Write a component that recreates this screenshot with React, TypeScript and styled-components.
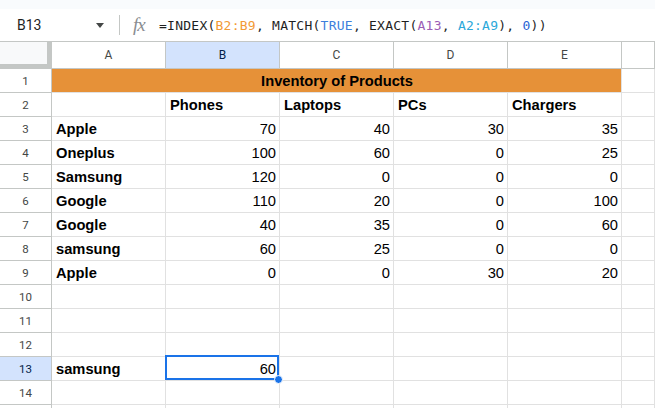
import styled, { createGlobalStyle } from "styled-components";

const GlobalStyle = createGlobalStyle`
  html, body {
    margin: 0;
    padding: 0;
    background: #ffffff;
    overflow: hidden;
  }
  body {
    font-family: "Liberation Sans", Arial, sans-serif;
  }
`;

const columns = ["A", "B", "C", "D", "E"];

const rows: (string | number)[][] = [
  ["Apple", 70, 40, 30, 35],
  ["Oneplus", 100, 60, 0, 25],
  ["Samsung", 120, 0, 0, 0],
  ["Google", 110, 20, 0, 100],
  ["Google", 40, 35, 0, 60],
  ["samsung", 60, 25, 0, 0],
  ["Apple", 0, 0, 30, 20],
];

const App = () => {
  return (
    <Page>
      <GlobalStyle />
      <TopStrip />

      {/* formula bar */}
      <FormulaBar>
        <NameBox>
          <span>B13</span>
          <Caret />
        </NameBox>
        <Divider />
        <FxIcon>fx</FxIcon>
        <Formula>
          =INDEX(<Ref $color="#f29a36">B2:B9</Ref>, MATCH(
          <Ref $color="#3d7fdc">TRUE</Ref>, EXACT(
          <Ref $color="#9b5cb6">A13</Ref>, <Ref $color="#2ba8d9">A2:A9</Ref>),{" "}
          <Ref $color="#2a63d4">0</Ref>))
        </Formula>
      </FormulaBar>

      {/* sheet grid */}
      <Sheet>
        <Corner />
        {columns.map((c) => (
          <ColHead key={c} $active={c === "B"}>
            {c}
          </ColHead>
        ))}
        <ColHead />

        {/* row 1 */}
        <RowHead>1</RowHead>
        <Title>Inventory of Products</Title>
        <Cell />

        {/* row 2 */}
        <RowHead>2</RowHead>
        <Cell />
        <Cell $bold>Phones</Cell>
        <Cell $bold>Laptops</Cell>
        <Cell $bold>PCs</Cell>
        <Cell $bold>Chargers</Cell>
        <Cell />

        {rows.map((r, i) => (
          <Row key={i} num={i + 3} values={r} />
        ))}

        {[10, 11, 12].map((n) => (
          <EmptyRow key={n} num={n} />
        ))}

        {/* row 13 */}
        <RowHead $active>13</RowHead>
        <Cell $bold>samsung</Cell>
        <Cell $align="right">
          60
          <Selection>
            <Handle />
          </Selection>
        </Cell>
        <Cell />
        <Cell />
        <Cell />
        <Cell />

        <EmptyRow num={14} />
        <EmptyRow />
      </Sheet>
    </Page>
  );
};

const Row = ({ num, values }: { num: number; values: (string | number)[] }) => (
  <>
    <RowHead>{num}</RowHead>
    {values.map((v, i) =>
      typeof v === "string" ? (
        <Cell key={i} $bold>
          {v}
        </Cell>
      ) : (
        <Cell key={i} $align="right">
          {v}
        </Cell>
      )
    )}
    <Cell />
  </>
);

const EmptyRow = ({ num }: { num?: number }) => (
  <>
    <RowHead>{num}</RowHead>
    {[0, 1, 2, 3, 4, 5].map((i) => (
      <Cell key={i} />
    ))}
  </>
);

export default App;

const Page = styled.div`
  width: 655px;
  height: 408px;
  overflow: hidden;
  background: #ffffff;
`;

const TopStrip = styled.div`
  height: 9px;
  background: #f9fbfd;
`;

const FormulaBar = styled.div`
  display: flex;
  align-items: center;
  height: 33px;
  box-sizing: border-box;
  border-bottom: 1px solid #c4c7c5;
  background: #ffffff;
`;

const NameBox = styled.div`
  display: flex;
  align-items: center;
  justify-content: space-between;
  width: 119px;
  box-sizing: border-box;
  padding: 0 15px 0 17px;
  font-family: Roboto, "Liberation Sans", sans-serif;
  font-size: 14px;
  color: #1f1f1f;
`;

const Caret = styled.span`
  width: 0;
  height: 0;
  border-left: 4px solid transparent;
  border-right: 4px solid transparent;
  border-top: 5px solid #444746;
`;

const Divider = styled.div`
  width: 1px;
  height: 20px;
  background: #c4c7c5;
`;

const FxIcon = styled.span`
  margin-left: 13px;
  width: 26px;
  font-family: "Liberation Serif", "DejaVu Serif", serif;
  font-style: italic;
  font-size: 19px;
  color: #8a8d91;
  letter-spacing: -1px;
`;

const Formula = styled.div`
  font-family: "DejaVu Sans Mono", "Liberation Mono", monospace;
  font-size: 13px;
  color: #1f1f1f;
  white-space: pre;
  letter-spacing: 0.25px;
`;

const Ref = styled.span<{ $color: string }>`
  color: ${({ $color }) => $color};
`;

const Sheet = styled.div`
  display: grid;
  grid-template-columns: 52px repeat(5, 114px) 1fr;
  grid-template-rows: 27px;
  grid-auto-rows: 24px;
`;

const Corner = styled.div`
  box-sizing: border-box;
  background: #f8f9fa;
  border-right: 5px solid #c4c7c5;
  border-bottom: 5px solid #c4c7c5;
`;

const ColHead = styled.div<{ $active?: boolean }>`
  display: flex;
  align-items: center;
  justify-content: center;
  box-sizing: border-box;
  border-right: 1px solid #c4c7c5;
  border-bottom: 1px solid #c4c7c5;
  background: ${({ $active }) => ($active ? "#d3e3fd" : "#ffffff")};
  color: ${({ $active }) => ($active ? "#041e49" : "#444746")};
  font-family: Roboto, "Liberation Sans", sans-serif;
  font-size: 12px;
`;

const RowHead = styled.div<{ $active?: boolean }>`
  display: flex;
  align-items: center;
  justify-content: center;
  box-sizing: border-box;
  border-right: 1px solid #c4c7c5;
  border-bottom: 1px solid #c4c7c5;
  background: ${({ $active }) => ($active ? "#d3e3fd" : "#ffffff")};
  color: ${({ $active }) => ($active ? "#041e49" : "#444746")};
  font-family: Roboto, "Liberation Sans", sans-serif;
  font-size: 11.5px;
`;

const Cell = styled.div<{ $bold?: boolean; $align?: "left" | "right" }>`
  position: relative;
  display: flex;
  align-items: center;
  justify-content: ${({ $align }) => ($align === "right" ? "flex-end" : "flex-start")};
  box-sizing: border-box;
  padding: 0 3px 0 4px;
  border-right: 1px solid #e1e1e1;
  border-bottom: 1px solid #e1e1e1;
  font-size: 14.7px;
  font-weight: ${({ $bold }) => ($bold ? 700 : 400)};
  color: #000000;
  white-space: nowrap;
`;

const Title = styled(Cell)`
  grid-column: span 5;
  justify-content: center;
  background: #e69138;
  font-weight: 700;
`;

const Selection = styled.div`
  position: absolute;
  top: -2px;
  left: -1px;
  right: 0;
  bottom: 0;
  box-sizing: border-box;
  border: 2px solid #1a73e8;
  z-index: 2;
`;

const Handle = styled.div`
  position: absolute;
  right: -6px;
  bottom: -6px;
  width: 9px;
  height: 9px;
  box-sizing: border-box;
  border-radius: 50%;
  background: #1a73e8;
  border: 1px solid #ffffff;
`;
